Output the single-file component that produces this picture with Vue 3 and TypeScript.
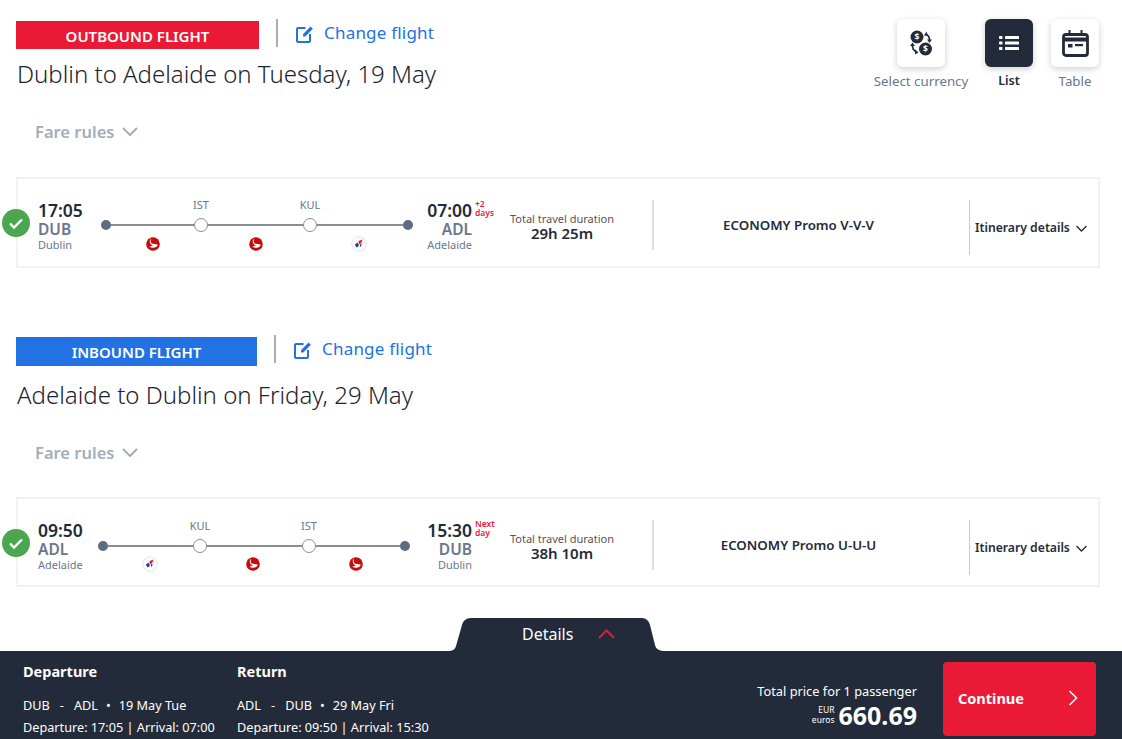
<script setup lang="ts">
interface Leg {
  key: string
  mod: string
  badge: string
  title: string
  dep: string; depCode: string; depCity: string
  arr: string; arrCode: string; arrCity: string
  plus: string[]
  stops: string[]
  logos: string[]
  dur: string
  fare: string
}
const legs: Leg[] = [
  { key: 'out', mod: 'out', badge: 'OUTBOUND FLIGHT', title: 'Dublin to Adelaide on Tuesday, 19 May',
    dep: '17:05', depCode: 'DUB', depCity: 'Dublin', arr: '07:00', arrCode: 'ADL', arrCity: 'Adelaide',
    plus: ['+2', 'days'], stops: ['IST', 'KUL'], logos: ['tk', 'tk', 'mh'], dur: '29h 25m', fare: 'ECONOMY Promo V-V-V' },
  { key: 'in', mod: 'in', badge: 'INBOUND FLIGHT', title: 'Adelaide to Dublin on Friday, 29 May',
    dep: '09:50', depCode: 'ADL', depCity: 'Adelaide', arr: '15:30', arrCode: 'DUB', arrCity: 'Dublin',
    plus: ['Next', 'day'], stops: ['KUL', 'IST'], logos: ['mh', 'tk', 'tk'], dur: '38h 10m', fare: 'ECONOMY Promo U-U-U' },
]
const summary = [
  { head: 'Departure', route: ['DUB', 'ADL', '19 May Tue'], times: 'Departure: 17:05 | Arrival: 07:00' },
  { head: 'Return', route: ['ADL', 'DUB', '29 May Fri'], times: 'Departure: 09:50 | Arrival: 15:30' },
]
</script>

<template>
  <div class="page">
    <section v-for="leg in legs" :key="leg.key" class="leg" :class="'leg--' + leg.mod">
      <div class="head">
        <div class="head-left">
          <div class="badge-row">
            <div class="badge">{{ leg.badge }}</div>
            <div class="badge-sep"></div>
            <svg class="edit" viewBox="0 0 18 18" fill="none" stroke="#2272e3" stroke-width="2">
              <path d="M9.500 3H2a1 1 0 0 0-1 1v12a1 1 0 0 0 1 1h11a1 1 0 0 0 1-1V9" />
              <path d="M7 11.500V9.200l7.500-7.700 2.400 2.300-7.600 7.700Z" fill="#2272e3" stroke="none" />
            </svg>
            <span class="change">Change flight</span>
          </div>
          <h1 class="title">{{ leg.title }}</h1>
        </div>
        <div v-if="leg.key === 'out'" class="tools">
          <div class="tool tool--wide">
            <div class="tool-btn">
              <svg viewBox="0 0 24 26" width="24" height="26">
                <circle cx="8" cy="7" r="6.500" fill="#232b3a" />
                <circle cx="16.500" cy="19" r="6.500" fill="#232b3a" />
                <text x="8" y="10.300" class="coin">$</text>
                <text x="16.500" y="22.300" class="coin">$</text>
                <path d="M16.500 4c2.500 1 4 3 4 6M3.500 15.500c0 3 1 5 3.500 6" fill="none" stroke="#232b3a" stroke-width="1.700" />
                <path d="M15 5.500 17.500 1.500 19 6ZM18 9.500h5l-2.500 3.500ZM1 16h5L3.500 12.500ZM6 19.500v5l3.500-2Z" fill="#232b3a" />
              </svg>
            </div>
            <span class="tool-label">Select currency</span>
          </div>
          <div class="tool">
            <div class="tool-btn tool-btn--on">
              <svg viewBox="0 0 20 16" width="20" height="16" fill="#fff">
                <rect x="0" y="1" width="3.500" height="3" rx=".8" /><rect x="6" y="1" width="14" height="3" rx=".5" />
                <rect x="0" y="6.500" width="3.500" height="3" rx=".8" /><rect x="6" y="6.500" width="14" height="3" rx=".5" />
                <rect x="0" y="12" width="3.500" height="3" rx=".8" /><rect x="6" y="12" width="14" height="3" rx=".5" />
              </svg>
            </div>
            <span class="tool-label tool-label--on">List</span>
          </div>
          <div class="tool tool--last">
            <div class="tool-btn">
              <svg viewBox="0 0 27 27" width="27" height="27" fill="none" stroke="#232b3a" stroke-width="2.800">
                <rect x="1.500" y="4.500" width="24" height="21" rx="2.500" />
                <path d="M1.500 9.500h24" stroke-width="4" />
                <path d="M7.500 0v5M19.500 0v5" stroke-width="2" />
                <rect x="6" y="14" width="4.500" height="3.500" fill="#232b3a" stroke="none" />
                <rect x="13" y="14" width="8" height="2.200" fill="#232b3a" stroke="none" />
              </svg>
            </div>
            <span class="tool-label">Table</span>
          </div>
        </div>
      </div>

      <div class="fare-rules">
        <span>Fare rules</span>
        <svg width="16" height="9" viewBox="0 0 16 9" fill="none" stroke="#a4adbb" stroke-width="2"><path d="M1 1l7 7 7-7" /></svg>
      </div>

      <div class="card">
        <div class="check">
          <svg width="14" height="11" viewBox="0 0 14 11" fill="none" stroke="#fff" stroke-width="2.400"><path d="M1 5.500 5 9.500 13 1.500" /></svg>
        </div>
        <div class="dep">
          <div class="time">{{ leg.dep }}</div>
          <div class="code">{{ leg.depCode }}</div>
          <div class="city">{{ leg.depCity }}</div>
        </div>
        <div class="route">
          <div class="stops">
            <span v-for="s in leg.stops" :key="s" class="stop">{{ s }}</span>
          </div>
          <div class="line">
            <i class="end"></i><i class="seg seg--a"></i><i class="via"></i><i class="seg seg--b"></i><i class="via"></i><i class="seg"></i><i class="end"></i>
          </div>
          <div class="logos">
            <template v-for="(l, i) in leg.logos" :key="i">
              <svg v-if="l === 'tk'" class="logo" viewBox="0 0 16 16">
                <circle cx="8" cy="8" r="6.800" fill="#c70a0c" />
                <path d="M6 2.500c-.5 2-.3 3.500.5 5L12.500 8.500c.5 1-1 3-4 3.200-1.500.1-3-.3-4.500-1.200 1.500 0 3-.2 3.800-.8C6 9 4.800 7.200 4.800 5.500 4.800 4.300 5.300 3.200 6 2.500Z" fill="#fff" />
              </svg>
              <svg v-else class="logo" viewBox="0 0 16 16">
                <circle cx="8" cy="8" r="7.200" fill="#fff" stroke="#dcdcdc" stroke-width=".8" />
                <path d="M3.800 8.500 7 6.500l.8 3.500-2.300 1.500Z" fill="#1c3f94" />
                <path d="M7.500 5 11.500 3.500 10 7.500 8 8Z" fill="#d8232a" />
                <path d="M8.500 8.500l2.200-.5-1 3.200Z" fill="#1c3f94" />
                <path d="M10.500 6.500 12 5.500l-.5 2.500Z" fill="#f2a3a5" />
              </svg>
            </template>
          </div>
        </div>
        <div class="arr">
          <div class="time">{{ leg.arr }}<span class="plus"><span>{{ leg.plus[0] }}</span><span>{{ leg.plus[1] }}</span></span></div>
          <div class="code">{{ leg.arrCode }}</div>
          <div class="city">{{ leg.arrCity }}</div>
        </div>
        <div class="dur">
          <div class="dur-label">Total travel duration</div>
          <div class="dur-val">{{ leg.dur }}</div>
        </div>
        <div class="vsep"></div>
        <div class="fare">{{ leg.fare }}</div>
        <div class="vsep vsep--thin"></div>
        <div class="itin">
          <span>Itinerary details</span>
          <svg width="11" height="7" viewBox="0 0 11 7" fill="none" stroke="#232b3a" stroke-width="1.400"><path d="M.5 1l5 5 5-5" /></svg>
        </div>
      </div>
    </section>

    <footer class="foot">
      <div class="tab">
        <svg class="tab-bg" width="218" height="33" viewBox="0 0 218 33">
          <path d="M0 33c4 0 7-1 8-5l6-21c1-4 4-7 9-7h171c4 0 7 3 8 7l5 20c1 4 4 6 11 6Z" fill="#232b3a" />
        </svg>
        <span class="tab-text">Details</span>
        <svg class="tab-chev" width="17" height="10" viewBox="0 0 17 10" fill="none" stroke="#ea1a37" stroke-width="2"><path d="M1 9l7.500-7.500L16 9" /></svg>
      </div>
      <div class="bar">
        <div v-for="s in summary" :key="s.head" class="sum">
          <div class="sum-head">{{ s.head }}</div>
          <div class="sum-row"><span>{{ s.route[0] }}</span><span class="dash">-</span><span>{{ s.route[1] }}</span><span class="dot">•</span><span>{{ s.route[2] }}</span></div>
          <div class="sum-row sum-row--t">{{ s.times }}</div>
        </div>
        <div class="total">
          <div class="total-label">Total price for 1 passenger</div>
          <div class="total-price">
            <span class="cur"><span>EUR</span><span>euros</span></span>
            <span class="amount">660.69</span>
          </div>
        </div>
        <button class="cta" type="button">
          <span>Continue</span>
          <svg width="10" height="16" viewBox="0 0 10 16" fill="none" stroke="#fff" stroke-width="1.600"><path d="M1.500 1l7 7-7 7" /></svg>
        </button>
      </div>
    </footer>
  </div>
</template>

<style>
html, body { margin: 0; background: #fff; }
</style>

<style scoped>
.page {
  width: 1122px;
  height: 739px;
  overflow: hidden;
  display: flex;
  flex-direction: column;
  font-family: "Noto Sans", "Open Sans", sans-serif;
  color: #232b3a;
  background: #fff;
}
.leg { padding: 0 22px 0 16px; }
.leg--out { padding-top: 19px; }
.leg--in { padding-top: 67px; }
.head { display: flex; justify-content: space-between; align-items: flex-start; }
.badge-row { display: flex; align-items: flex-start; height: 30px; }
.badge {
  width: 243px; height: 28px; margin-top: 2px; background: #ea1a37; color: #fff;
  font-size: 15px; font-weight: 600; line-height: 30px; text-align: center;
}
.leg--in .badge { width: 241px; height: 29px; background: #2272e3; }
.badge-sep { width: 2px; height: 28px; margin-left: 17px; background: #a9aeb8; }
.edit { width: 18px; height: 18px; margin: 6px 0 0 18px; }
.change { margin-left: 10px; margin-top: 2px; font-size: 17px; line-height: 24px; color: #2272e3; letter-spacing: .2px; }
.title { margin: 8px 0 0 1px; font-size: 24px; font-weight: 300; line-height: 34px; color: #1c2330; }
.leg--in .title { margin: 13px 0 0 1px; }

.tools { display: flex; align-items: flex-start; margin-right: 1px; }
.tool { display: flex; flex-direction: column; align-items: center; width: 48px; margin-left: 18px; }
.tool--wide { width: 96px; margin-left: 0; }
.tool:nth-child(2) { margin-left: 16px; }
.tool-btn {
  width: 48px; height: 48px; border-radius: 6px; background: #fff;
  box-shadow: 0 2px 6px rgba(35, 43, 58, .22);
  display: flex; align-items: center; justify-content: center;
}
.tool-btn--on { background: #232b3a; }
.tool-label { margin-top: 5px; font-size: 13.300px; line-height: 18px; color: #69778c; white-space: nowrap; }
.tool-label--on { color: #232b3a; font-weight: 600; font-size: 12.500px; }
.coin { font-size: 8.500px; font-weight: 700; fill: #fff; text-anchor: middle; }

.fare-rules {
  display: flex; align-items: center; gap: 8px; height: 22px; margin: 29px 0 0 19px;
  font-size: 16.500px; font-weight: 600; color: #a4adbb;
}
.card {
  position: relative; display: flex; align-items: flex-start; box-sizing: border-box;
  height: 91px; margin-top: 35px; padding-left: 20px; border: 2px solid #f1f2f3; background: #fff;
}
.leg--in .card { height: 90px; margin-top: 34px; }
.check {
  position: absolute; left: -16px; top: 30px; width: 28px; height: 28px; border-radius: 50%;
  background: #4ca64f; display: flex; align-items: center; justify-content: center;
}
.dep { width: 63px; margin-top: 21px; }
.leg--in .dep { width: 60px; }
.time { position: relative; font-size: 17.500px; font-weight: 600; line-height: 20px; white-space: nowrap; }
.code { font-size: 15.500px; font-weight: 600; line-height: 18px; color: #69778c; }
.city { font-size: 11px; line-height: 14px; color: #69778c; }
.route { width: 312px; margin-top: 19px; }
.leg--in .route { margin-top: 20px; }
.stops { display: flex; gap: 79px; height: 14px; padding-left: 85px; }
.leg--in .stops { padding-left: 87px; }
.stop { width: 30px; text-align: center; font-size: 11px; line-height: 14px; color: #69778c; }
.line { display: flex; align-items: center; height: 12px; margin-top: 7px; }
.end { width: 10px; height: 10px; border-radius: 50%; background: #5e6c80; flex: none; }
.via { width: 14px; height: 14px; box-sizing: border-box; border-radius: 50%; border: 1.500px solid #8a8d92; background: #fff; flex: none; }
.seg { flex: 1; height: 2px; background: #8a8d92; }
.seg--a { flex: none; width: 83px; }
.leg--in .seg--a { width: 85px; }
.seg--b { flex: none; width: 95px; }
.logos { display: flex; gap: 87px; padding-left: 44px; margin-top: 5px; }
.leg--in .logos { margin-top: 4px; }
.logo { width: 16px; height: 16px; flex: none; }
.arr { width: 59px; margin-top: 21px; text-align: right; }
.leg--in .arr { width: 62px; }
.plus {
  position: absolute; left: 100%; top: -1px; margin-left: 3px; display: flex; flex-direction: column;
  font-size: 8.500px; font-weight: 600; line-height: 9px; color: #ea1a37; text-align: left;
}
.dur { width: 110px; margin: 33px 0 0 35px; text-align: center; }
.dur-label { font-size: 11px; line-height: 14px; color: #555; white-space: nowrap; }
.dur-val { font-size: 15px; font-weight: 600; line-height: 20px; margin-top: -3px; }
.vsep { width: 2px; height: 50px; margin: 21px 0 0 35px; background: #dcdde0; flex: none; }
.vsep--thin { width: 1px; height: 55px; margin-left: 0; background: #c9cbd0; }
.fare {
  flex: none; width: 315px; box-sizing: border-box; padding-right: 26px; margin-top: 37px;
  text-align: center; font-size: 13.300px; font-weight: 600; line-height: 18px;
}
.itin { display: flex; align-items: center; gap: 6px; margin: 40px 0 0 5px; font-size: 12.200px; font-weight: 600; line-height: 18px; white-space: nowrap; }

.foot { margin-top: 31px; flex: 1; display: flex; flex-direction: column; }
.tab { position: relative; width: 218px; height: 33px; margin-left: 448px; flex: none; }
.tab-bg { position: absolute; left: 0; top: 0; }
.tab-text { position: absolute; left: 74px; top: 5px; font-size: 16px; line-height: 22px; color: #fff; }
.tab-chev { position: absolute; left: 150px; top: 11px; }
.bar {
  flex: 1; background: #232b3a; color: #fff; display: flex; align-items: flex-start;
  padding: 0 26px 0 23px; position: relative;
}
.sum { width: 214px; padding-top: 10px; }
.sum-head { font-size: 14.500px; font-weight: 700; line-height: 20px; }
.sum-row { display: flex; margin-top: 15px; font-size: 12.700px; line-height: 18px; white-space: nowrap; }
.sum-row--t { margin-top: 4px; }
.dash { margin: 0 10px; }
.dot { margin: 0 8px; }
.total { margin: 31px 26px 0 auto; text-align: right; }
.total-label { font-size: 12.800px; line-height: 18px; }
.total-price { display: flex; justify-content: flex-end; align-items: center; gap: 4px; margin-top: 0; }
.cur { display: flex; flex-direction: column; align-items: flex-end; font-size: 8.500px; line-height: 10px; }
.amount { font-size: 25px; font-weight: 700; line-height: 30px; }
.cta {
  width: 153px; height: 74px; margin-top: 11px; padding: 0 18px 2px 15px; border: 0; border-radius: 4px;
  background: #ea1a37; color: #fff; display: flex; align-items: center; justify-content: space-between;
  font-family: inherit; font-size: 14.500px; font-weight: 700;
}
</style>
